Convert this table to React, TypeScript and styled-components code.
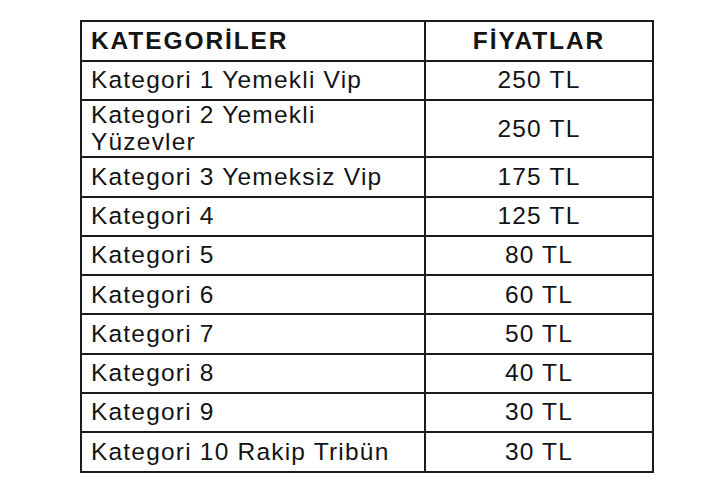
import styled, { createGlobalStyle } from "styled-components";

// Ticket price list: one category per row, price centred in the right column.
type PriceRow = {
    category: string;
    price: string;
};

const ROWS: PriceRow[] = [
    { category: "Kategori 1 Yemekli Vip", price: "250 TL" },
    { category: "Kategori 2 Yemekli Yüzevler", price: "250 TL" },
    { category: "Kategori 3 Yemeksiz Vip", price: "175 TL" },
    { category: "Kategori 4", price: "125 TL" },
    { category: "Kategori 5", price: "80 TL" },
    { category: "Kategori 6", price: "60 TL" },
    { category: "Kategori 7", price: "50 TL" },
    { category: "Kategori 8", price: "40 TL" },
    { category: "Kategori 9", price: "30 TL" },
    { category: "Kategori 10 Rakip Tribün", price: "30 TL" },
];

const GlobalStyle = createGlobalStyle`
    html, body {
        margin: 0;
        padding: 0;
        background: #ffffff;
    }

    body {
        font-family: "Liberation Sans", Arial, Helvetica, sans-serif;
        color: #141414;
    }
`;

const Page = styled.div`
    width: 714px;
    height: 500px;
    padding: 20px 0 0 80px;
    box-sizing: border-box;
    background: #ffffff;
`;

const PriceTable = styled.table`
    width: 572px;
    border-collapse: collapse;
    border: 2px solid #1c1c1c;
    table-layout: fixed;
`;

const HeadCell = styled.th<{ $align: "left" | "center" }>`
    height: 36px;
    padding: 1px 9px;
    border: 2px solid #1c1c1c;
    text-align: ${({ $align }) => $align};
    vertical-align: middle;
    font-size: 24.5px;
    line-height: 26.5px;
    font-weight: 700;
    letter-spacing: 1.9px;
`;

const Cell = styled.td<{ $align: "left" | "center" }>`
    height: 35.3px;
    padding: 1px 9px;
    border: 2px solid #1c1c1c;
    text-align: ${({ $align }) => $align};
    vertical-align: middle;
    font-size: 24.5px;
    line-height: 26.5px;
    font-weight: 400;
    letter-spacing: 1.2px;
`;

export default function App() {
    return (
        <>
            <GlobalStyle />
            <Page>
                <PriceTable>
                    <colgroup>
                        <col style={{ width: 344 }} />
                        <col style={{ width: 228 }} />
                    </colgroup>
                    <thead>
                        <tr>
                            <HeadCell $align="left">KATEGORİLER</HeadCell>
                            <HeadCell $align="center">FİYATLAR</HeadCell>
                        </tr>
                    </thead>
                    <tbody>
                        {ROWS.map((row) => (
                            <tr key={row.category}>
                                <Cell $align="left">{row.category}</Cell>
                                <Cell $align="center">{row.price}</Cell>
                            </tr>
                        ))}
                    </tbody>
                </PriceTable>
            </Page>
        </>
    );
}
